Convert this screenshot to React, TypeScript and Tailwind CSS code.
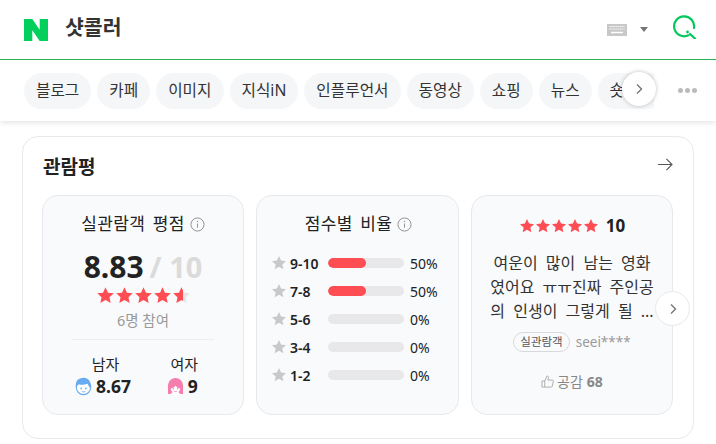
import React from "react";

const FONT = "font-['Noto_Sans','Noto_Sans_CJK_KR',sans-serif]";
const tabs = ["블로그", "카페", "이미지", "지식iN", "인플루언서", "동영상", "쇼핑", "뉴스", "숏텐츠"];
const ratios = [
  { label: "9-10", pct: 50 },
  { label: "7-8", pct: 50 },
  { label: "5-6", pct: 0 },
  { label: "3-4", pct: 0 },
  { label: "1-2", pct: 0 },
];

const STAR = "M12 1.5l3.1 6.9 7.4.8-5.5 5 1.5 7.3L12 17.8l-6.5 3.7L7 14.2l-5.5-5 7.4-.8z";

const Star = ({ className }: { className: string }) => (
  <svg viewBox="0 0 24 24" className={className} fill="currentColor">
    <path d={STAR} />
  </svg>
);

const Info = () => (
  <svg viewBox="0 0 16 16" className="ml-[5px] h-[15px] w-[15px] shrink-0 text-[#8f8f8f]" fill="none" stroke="currentColor">
    <circle cx="8" cy="8" r="7" />
    <path d="M8 7v4.5" />
    <circle cx="8" cy="4.8" r=".7" fill="currentColor" stroke="none" />
  </svg>
);

const Chevron = () => (
  <svg viewBox="0 0 12 12" className="h-3 w-3 text-[#777]" fill="none" stroke="currentColor" strokeWidth="1.4">
    <path d="M4 1.5 8.5 6 4 10.5" />
  </svg>
);

const Boy = () => (
  <svg viewBox="0 0 18 20" className="h-[19px] w-[17px]">
    <circle cx="9" cy="11" r="7.6" fill="#fff" stroke="#68abf0" strokeWidth="1.2" />
    <path d="M1 11C0 5 3 1 8 1c5-1 9 3 9 9l-2 1c-.5-2-1-3-2-4-3 1.500-7 1.500-9 .5-1 1-2 2-3 3.500z" fill="#68abf0" />
    <circle cx="6.500" cy="12" r=".9" fill="#68abf0" />
    <circle cx="11.500" cy="12" r=".9" fill="#68abf0" />
    <path d="M7 15c1 .9 3 .9 4 0" fill="none" stroke="#68abf0" />
  </svg>
);

const Girl = () => (
  <svg viewBox="0 0 18 20" className="h-[19px] w-[17px]">
    <path d="M9 1c5 0 8 4 8 9v8H1v-8c0-5 3-9 8-9z" fill="#f47fae" />
    <path d="M3.500 19c.5-1.500 1.500-2.500 2.500-3-1-1-2-2.500-2-4 2 0 4-1 5-3 1 2 3 3 5 3 0 1.500-1 3-2 4 1 .5 2 1.500 2.500 3z" fill="#fff" />
    <circle cx="6.800" cy="12.500" r=".8" fill="#f47fae" />
    <circle cx="11.200" cy="12.500" r=".8" fill="#f47fae" />
    <path d="M7.500 15c.8.6 2.200.6 3 0" fill="none" stroke="#f47fae" />
  </svg>
);

const App = () => {
  return (
    <div className={`${FONT} h-[444px] w-[716px] overflow-hidden bg-white text-[#222]`}>
      {/* search bar */}
      <header className="flex h-[60px] items-center border-b border-[#2db45f] pl-6 pr-[19px]">
        <svg viewBox="0 0 24 22" className="h-[22px] w-6 text-[#03cf5d]" fill="currentColor">
          <path d="M0 0h8.300l7.400 10.700V0H24v22h-8.300L8.300 11.300V22H0z" />
        </svg>
        <h1 className="mb-[5px] ml-[17px] flex-1 text-[20.500px] font-bold leading-[28px] text-[#333]">샷콜러</h1>
        <svg viewBox="0 0 20 12" className="h-3 w-5">
          <rect width="20" height="12" fill="#c8c8c8" />
          <path d="M2.500 2.500h15M2.500 5h15" stroke="#fff" strokeWidth="1" strokeDasharray="1.300 .7" />
          <path d="M4 8.500h12" stroke="#fff" strokeWidth="1.500" />
        </svg>
        <svg viewBox="0 0 8 5" className="ml-[13px] h-[5px] w-2 text-[#777]" fill="currentColor">
          <path d="M0 0h8L4 5z" />
        </svg>
        <svg viewBox="0 0 24 24" className="mb-[5px] ml-[25px] h-6 w-6 text-[#03c75a]" fill="none" stroke="currentColor" strokeWidth="2.200" strokeLinecap="round">
          <path d="M15.500 20.300A10 10 0 1 1 21 13" />
          <path d="M17 19l5 4.500" />
          <circle cx="14.500" cy="17" r="1.400" fill="currentColor" stroke="none" />
        </svg>
      </header>

      {/* tabs */}
      <nav className="relative z-10 flex h-[61px] items-center bg-white pl-6 pr-[19px] shadow-[0_2px_5px_rgba(0,0,0,0.10)]">
        <div className="flex w-[630px] gap-[6px] overflow-hidden">
          {tabs.map((tab) => (
            <span key={tab} className="flex h-9 shrink-0 items-center rounded-full bg-[#f5f6f8] px-3 text-[15.700px] text-[#333]">
              {tab}
            </span>
          ))}
        </div>
        <button className="absolute left-[622px] top-[12px] flex h-[34px] w-[34px] items-center justify-center rounded-full bg-white shadow-[0_0_4px_rgba(0,0,0,0.25)]">
          <Chevron />
        </button>
        <div className="ml-auto flex gap-[2px]">
          <i className="h-[5px] w-[5px] rounded-full bg-[#bbb]" />
          <i className="h-[5px] w-[5px] rounded-full bg-[#bbb]" />
          <i className="h-[5px] w-[5px] rounded-full bg-[#bbb]" />
        </div>
      </nav>

      <main className="px-[22px] pt-[15px]">
        <section className="h-[303px] rounded-[16px] border border-[#e8e9ec] bg-white pl-[19px] pr-5">
          <div className="flex h-[58px] items-center justify-between">
            <h2 className="ml-px mt-[2px] text-[19px] font-bold text-[#222]">관람평</h2>
            <svg viewBox="0 0 16 14" className="mb-[4px] h-[13px] w-[15px] text-[#555]" fill="none" stroke="currentColor" strokeWidth="1.200">
              <path d="M0 7h15M9 1l6 6-6 6" />
            </svg>
          </div>

          <div className="relative grid grid-cols-[202px_203px_202px] gap-3">
            {/* score */}
            <div className="h-[220px] rounded-[16px] border border-[#e8e9ec] bg-[#f9fafc] px-[29px] pt-[16px]">
              <div className="flex h-6 items-center justify-center text-[17px] tracking-[0.3px] [word-spacing:3px]">
                실관람객 평점
                <Info />
              </div>
              <div className="mt-[13px] flex h-[36px] items-center justify-center text-[30px] font-bold leading-9">
                8.83
                <span className="ml-[6px] text-[29px] text-[#dbdbdb]">/ 10</span>
              </div>
              <div className="relative mx-auto mt-px flex h-[19px] w-[94px] items-center text-[#ff4d54]">
                {[0, 1, 2, 3].map((i) => (
                  <Star key={i} className="h-[19px] w-[19px] shrink-0" />
                ))}
                <div className="relative h-[19px] w-[19px] shrink-0 text-[#e4e4e4]">
                  <Star className="h-[19px] w-[19px]" />
                  <div className="absolute left-0 top-0 h-[19px] w-[11px] overflow-hidden text-[#ff4d54]">
                    <Star className="h-[19px] w-[19px]" />
                  </div>
                </div>
              </div>
              <p className="mt-[5px] h-5 text-center text-[14.500px] leading-5 text-[#999]">6명 참여</p>
              <div className="mt-[9px] border-t border-[#eceef1]" />
              <div className="mt-[14px] flex justify-between px-[3px]">
                <div className="flex flex-col items-center">
                  <span className="pl-[5px] text-[15px] leading-5">남자</span>
                  <span className="flex items-center gap-[4px] text-[17.500px] font-bold leading-6">
                    <Boy />
                    8.67
                  </span>
                </div>
                <div className="mr-[13px] flex flex-col items-center">
                  <span className="pl-[4px] text-[15px] leading-5">여자</span>
                  <span className="flex items-center gap-[4px] text-[17.500px] font-bold leading-6">
                    <Girl />9
                  </span>
                </div>
              </div>
            </div>

            {/* ratio by score */}
            <div className="h-[220px] rounded-[16px] border border-[#e8e9ec] bg-[#f9fafc] pl-[14px] pr-3 pt-[16px]">
              <div className="flex h-6 items-center justify-center text-[17px] tracking-[0.3px] [word-spacing:3px]">
                점수별 비율
                <Info />
              </div>
              <ul className="mt-[17px] flex flex-col gap-2">
                {ratios.map((row) => (
                  <li key={row.label} className="flex h-5 items-center">
                    <Star className="h-[16px] w-[16px] shrink-0 text-[#c9c9c9]" />
                    <span className="ml-[3px] w-[38px] text-[14px] font-semibold">{row.label}</span>
                    <div className="h-[10px] w-[76px] overflow-hidden rounded-full bg-[#e8e8ea]">
                      <div className="h-full rounded-full bg-[#ff4d54]" style={{ width: `${row.pct}%` }} />
                    </div>
                    <span className="ml-[6px] text-[14px]">{row.pct}%</span>
                  </li>
                ))}
              </ul>
            </div>

            {/* review */}
            <div className="flex h-[220px] flex-col items-center rounded-[16px] border border-[#e8e9ec] bg-[#f9fafc] px-[14px] pt-[18px]">
              <div className="flex h-6 items-center">
                <div className="flex text-[#ff4d54]">
                  {[0, 1, 2, 3, 4].map((i) => (
                    <Star key={i} className="h-4 w-4" />
                  ))}
                </div>
                <span className="ml-[7px] text-[17px] font-bold">10</span>
              </div>
              <p className="mt-[13px] whitespace-nowrap text-center text-[16px] leading-[24px] text-[#333] [word-spacing:4px]">
                여운이 많이 남는 영화
                <br />
                였어요 ㅠㅠ진짜 주인공
                <br />
                의 인생이 그렇게 될 ...
              </p>
              <div className="mt-[7px] flex h-6 items-center">
                <span className="flex h-5 items-center rounded-full border border-[#d9d9dc] px-[6px] text-[11.500px] text-[#555]">실관람객</span>
                <span className="ml-[6px] text-[13.500px] text-[#999]">seei****</span>
              </div>
              <div className="mt-[17px] flex h-5 items-center text-[14px] text-[#888]">
                <svg viewBox="0 0 14 14" className="mr-[3px] h-[13px] w-[13px] text-[#aaa]" fill="none" stroke="currentColor">
                  <path d="M1 6.500h3v6.500H1zM4 6.500 6.500 1c1.200 0 1.800 1 1.500 2L7.500 5.500h5c.6 0 1 .6.800 1.200L12 12.500c-.1.300-.4.500-.8.500H4" />
                </svg>
                공감<b className="ml-1 font-bold">68</b>
              </div>
            </div>

            <button className="absolute left-[613px] top-[96px] flex h-[35px] w-[35px] items-center justify-center rounded-full border border-[#e8e9ec] bg-white">
              <Chevron />
            </button>
          </div>
        </section>
      </main>
    </div>
  );
};

export default App;
